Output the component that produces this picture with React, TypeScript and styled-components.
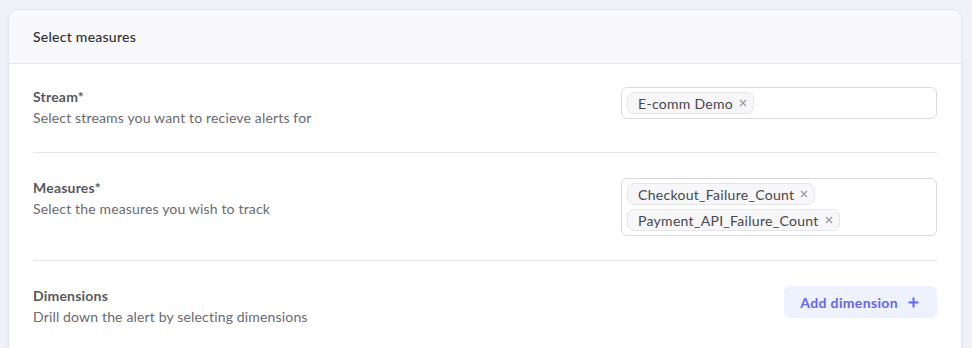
import React from "react";
import styled, { createGlobalStyle } from "styled-components";

const Global = createGlobalStyle`
  html, body { margin: 0; padding: 0; }
  body {
    background: #f1f1f8;
    font-family: Lato, "Open Sans", "Noto Sans", sans-serif;
    -webkit-font-smoothing: antialiased;
  }
`;

const Page = styled.div`
  padding: 10px 11px 0 9px;
  height: 348px;
  box-sizing: border-box;
  overflow: hidden;
`;

const Card = styled.section`
  background: #ffffff;
  border-radius: 9px;
  box-shadow: 0 0 0 1px #e6e5f3, 0 1px 4px rgba(120, 110, 200, 0.12);
  overflow: hidden;
  min-height: 400px;
`;

const Header = styled.header`
  height: 54px;
  box-sizing: border-box;
  background: #f9f8fc;
  border-bottom: 1px solid #e7e6ee;
  display: flex;
  align-items: center;
  padding: 0 24px;
  font-size: 14px;
  font-weight: 500;
  letter-spacing: 0.25px;
  color: #2f2f33;
`;

const Body = styled.div`
  padding: 0 24px;
`;

const Row = styled.div<{ $pb?: number }>`
  display: flex;
  justify-content: space-between;
  align-items: flex-start;
  padding: 23px 0 ${(p) => p.$pb ?? 24}px;
  border-bottom: 1px solid #e6e6ea;
  &:last-child {
    border-bottom: none;
  }
`;

const Info = styled.div<{ $top?: number }>`
  display: flex;
  flex-direction: column;
  padding-top: ${(p) => p.$top ?? 0}px;
`;

const Label = styled.div`
  font-size: 14px;
  line-height: 20px;
  font-weight: 700;
  letter-spacing: 0.2px;
  color: #58585c;
`;

const Desc = styled.div`
  font-size: 14px;
  line-height: 22px;
  letter-spacing: 0.16px;
  color: #6a6a70;
`;

const SelectBox = styled.div<{ $top?: number }>`
  width: 316px;
  margin-top: ${(p) => p.$top ?? 0}px;
  box-sizing: border-box;
  border: 1px solid #dadade;
  border-radius: 6px;
  padding: 4px 5px;
  display: flex;
  flex-wrap: wrap;
  gap: 4px;
  align-content: flex-start;
`;

const Chip = styled.span`
  display: inline-flex;
  align-items: center;
  gap: 6px;
  height: 22px;
  box-sizing: border-box;
  padding: 0 6px 0 10px;
  background: #f7f7f9;
  border: 1px solid #e5e5ea;
  border-radius: 7px;
  font-size: 14px;
  letter-spacing: 0.3px;
  color: #46464b;
`;

const Close = styled.svg`
  width: 8px;
  height: 8px;
  stroke: #9a9aa2;
  stroke-width: 1.3;
  fill: none;
`;

const AddButton = styled.button`
  margin-top: 2px;
  display: inline-flex;
  align-items: center;
  gap: 10px;
  height: 32px;
  padding: 0 18px 0 16px;
  border: none;
  border-radius: 6px;
  background: #eef1fe;
  color: #6466ee;
  font-family: inherit;
  font-size: 14px;
  font-weight: 700;
  letter-spacing: 0.35px;
  cursor: pointer;
`;

const Plus = styled.svg`
  width: 11px;
  height: 11px;
  stroke: #6466ee;
  stroke-width: 2;
  fill: none;
`;

const Tag = ({ text }: { text: string }) => (
  <Chip>
    {text}
    <Close viewBox="0 0 8 8">
      <path d="M1 1 L7 7 M7 1 L1 7" />
    </Close>
  </Chip>
);

export default function App() {
  return (
    <>
      <Global />
      <Page>
        <Card>
          <Header>Select measures</Header>
          <Body>
            <Row $pb={23}>
              <Info $top={0}>
                <Label>Stream*</Label>
                <Desc>Select streams you want to recieve alerts for</Desc>
              </Info>
              <SelectBox>
                <Tag text="E-comm Demo" />
              </SelectBox>
            </Row>
            <Row $pb={24}>
              <Info $top={2}>
                <Label>Measures*</Label>
                <Desc>Select the measures you wish to track</Desc>
              </Info>
              <SelectBox $top={2}>
                <Tag text="Checkout_Failure_Count" />
                <Tag text="Payment_API_Failure_Count" />
              </SelectBox>
            </Row>
            <Row>
              <Info $top={2}>
                <Label>Dimensions</Label>
                <Desc>Drill down the alert by selecting dimensions</Desc>
              </Info>
              <AddButton>
                Add dimension
                <Plus viewBox="0 0 11 11">
                  <path d="M5.5 0.5 V10.5 M0.5 5.5 H10.5" />
                </Plus>
              </AddButton>
            </Row>
          </Body>
        </Card>
      </Page>
    </>
  );
}
